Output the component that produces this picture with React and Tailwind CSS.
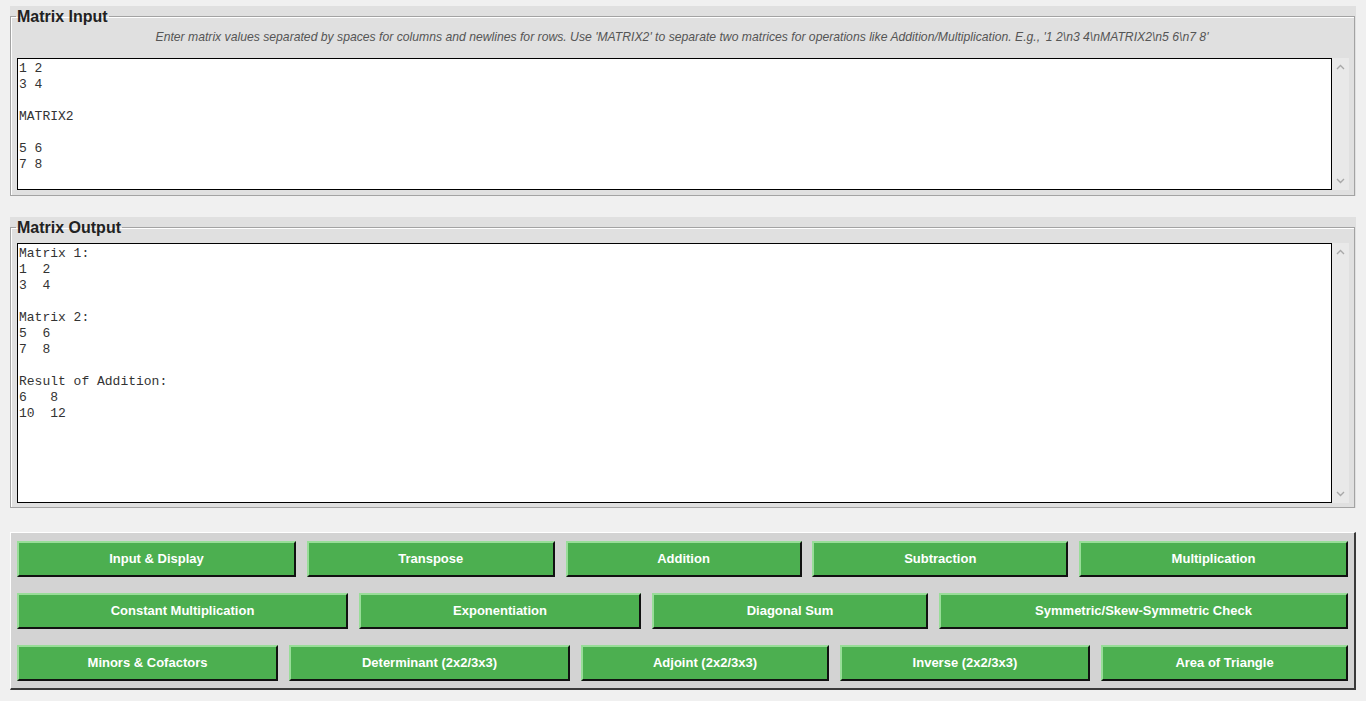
import React from 'react';

const inputText = '1 2\n3 4\n\nMATRIX2\n\n5 6\n7 8';
const outputText =
  'Matrix 1:\n1  2\n3  4\n\nMatrix 2:\n5  6\n7  8\n\nResult of Addition:\n6   8\n10  12';

const rows = [
  [
    ['Input & Display', 'w-[279px]'],
    ['Transpose', 'w-[248px]'],
    ['Addition', 'w-[236px]'],
    ['Subtraction', 'w-[256px]'],
    ['Multiplication', 'w-[269px]'],
  ],
  [
    ['Constant Multiplication', 'w-[331px]'],
    ['Exponentiation', 'w-[282px]'],
    ['Diagonal Sum', 'w-[276px]'],
    ['Symmetric/Skew-Symmetric Check', 'w-[409px]'],
  ],
  [
    ['Minors & Cofactors', 'w-[261px]'],
    ['Determinant (2x2/3x3)', 'w-[281px]'],
    ['Adjoint (2x2/3x3)', 'w-[248px]'],
    ['Inverse (2x2/3x3)', 'w-[250px]'],
    ['Area of Triangle', 'w-[247px]'],
  ],
];

const Chevron = ({ up }) => (
  <svg width="9" height="6" viewBox="0 0 9 6" className="text-[#a8a8a8]">
    <path
      d={up ? 'M1 5 L4.5 1.5 L8 5' : 'M1 1 L4.5 4.5 L8 1'}
      fill="none"
      stroke="currentColor"
      strokeWidth="1.4"
    />
  </svg>
);

const TextBox = ({ text, height }) => (
  <div className={`flex ${height}`}>
    <div className="flex-1 bg-white border border-black pl-[1px] pt-[2px] font-['Liberation_Mono',monospace] text-[13px] leading-[16px] text-[#333] whitespace-pre overflow-hidden">
      {text}
    </div>
    <div className="w-[17px] bg-[#e9e9e9] flex flex-col items-center justify-between py-[6px]">
      <Chevron up />
      <Chevron />
    </div>
  </div>
);

const Frame = ({ title, className, children }) => (
  <div className={`mx-[10px] bg-[#e0e0e0] ${className}`}>
    <fieldset className="h-full mr-px border border-[#a3a3a3] shadow-[inset_1px_1px_0_#ffffff] px-[6px] pr-[5px] pb-[4px]">
      <legend className="ml-[-1px] px-[1px] text-[16px] leading-[21px] font-bold text-[#222] font-['Liberation_Sans',Arial,sans-serif]">
        {title}
      </legend>
      {children}
    </fieldset>
  </div>
);

const App = () => {
  return (
    <div className="h-[701px] bg-[#f0f0f0] pt-[6px] font-['Liberation_Sans',Arial,sans-serif] overflow-hidden">
      <Frame title="Matrix Input" className="h-[190px]">
        <div className="h-[21px] leading-[21px] text-center italic text-[12.2px] text-[#555] mb-[10px] pr-[2px] whitespace-nowrap">
          Enter matrix values separated by spaces for columns and newlines for rows. Use 'MATRIX2' to separate two matrices for operations like Addition/Multiplication. E.g., '1 2\n3 4\nMATRIX2\n5 6\n7 8'
        </div>
        <TextBox text={inputText} height="h-[132px]" />
      </Frame>

      <Frame title="Matrix Output" className="h-[291px] mt-[21px]">
        <div className="mt-[5px]">
          <TextBox text={outputText} height="h-[260px]" />
        </div>
      </Frame>

      <div className="mx-[10px] mt-[24px] h-[158px] bg-[#d3d3d3] border-t border-l border-white border-r-2 border-b-2 border-r-[#3a3a3a] border-b-[#3a3a3a] pt-[8px] pl-[6px] pr-[6px] flex flex-col gap-[16px]">
        {rows.map((row, i) => (
          <div key={i} className="flex justify-between">
            {row.map(([label, w]) => (
              <button
                key={label}
                className={`${w} h-[36px] bg-[#4caf50] text-white font-bold text-[13px] border-t-2 border-l-2 border-t-[#98dd98] border-l-[#98dd98] border-r-2 border-b-2 border-r-[#111] border-b-[#111]`}
              >
                {label}
              </button>
            ))}
          </div>
        ))}
      </div>
    </div>
  );
};

export default App;
